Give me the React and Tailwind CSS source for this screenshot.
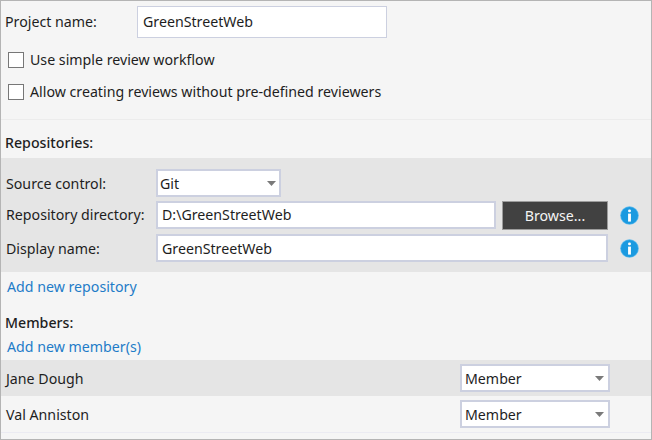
function Info() {
  return (
    <svg width="19" height="19" viewBox="0 0 20 20" className="shrink-0">
      <circle cx="10" cy="10" r="9.8" fill="#5cb9ec" />
      <circle cx="10" cy="10" r="9" fill="#1b9ae0" />
      <rect x="8.5" y="3.6" width="3" height="3" rx="1.3" fill="#fff" />
      <rect x="8.5" y="8" width="3" height="8.4" fill="#fff" />
    </svg>
  );
}

function Select({ value, className }) {
  return (
    <div className={`flex items-center justify-between bg-white border-2 border-[#ccd0e0] h-[28px] ${className}`}>
      <span className="pt-[2px]">{value}</span>
      <svg width="9" height="5" viewBox="0 0 9 5"><path d="M0 0h9L4.5 5z" fill="#7a7a7a" /></svg>
    </div>
  );
}

function Check({ label, className }) {
  return (
    <div className={`flex items-center gap-[6px] pl-[7px] ${className}`}>
      <div className="w-[16px] h-[16px] bg-white border border-[#777777]" />
      <span>{label}</span>
    </div>
  );
}

export default function App() {
  return (
    <div className="w-[652px] h-[440px] overflow-hidden bg-[#f5f5f5] border border-[#b4b4b4] text-[14.2px] leading-[20px] text-[#1e1e1e] font-['Noto_Sans',sans-serif]">
      <div className="flex items-center h-[32px] mt-[5px] pl-[4px]">
        <span className="w-[132px]">Project name:</span>
        <div className="w-[250px] h-[32px] flex items-center bg-white border border-[#ccd0e0] px-[5px]">GreenStreetWeb</div>
      </div>
      <Check label="Use simple review workflow" className="mt-[12px]" />
      <Check label="Allow creating reviews without pre-defined reviewers" className="mt-[12px]" />
      <div className="border-t border-[#ececec] mt-[17px]" />
      <div className="pl-[4px] mt-[13px] font-medium">Repositories:</div>
      <div className="bg-[#e5e5e5] mt-[5px] h-[114px] pt-[11px] pl-[5px]">
        <div className="flex items-center">
          <span className="w-[150px] pt-[2px]">Source control:</span>
          <Select value="Git" className="w-[125px] pl-[2px] pr-[3px]" />
        </div>
        <div className="flex items-start mt-[4px]">
          <span className="w-[150px] leading-[28px]">Repository directory:</span>
          <div className="w-[340px] h-[28px] flex items-center bg-white border-2 border-[#ccd0e0] px-[4px]">D:\GreenStreetWeb</div>
          <button className="w-[106px] h-[29px] ml-[6px] bg-[#414141] border border-[#9c9c9c] text-[#f4f4f4]">Browse...</button>
          <span className="ml-[12px] mt-[5px]"><Info /></span>
        </div>
        <div className="flex items-center mt-[4px]">
          <span className="w-[150px] pt-[2px]">Display name:</span>
          <div className="w-[452px] h-[28px] flex items-center bg-white border-2 border-[#ccd0e0] px-[4px] pt-[2px]">GreenStreetWeb</div>
          <span className="ml-[12px]"><Info /></span>
        </div>
      </div>
      <div className="pl-[6px] mt-[5px] text-[#1e7cc8]">Add new repository</div>
      <div className="pl-[4px] mt-[16px] font-medium">Members:</div>
      <div className="pl-[6px] mt-[4px] text-[#1e7cc8]">Add new member(s)</div>
      <div className="flex items-center justify-between h-[36px] mt-[3px] bg-[#e5e5e5] pl-[5px] pr-[41px]">
        <span className="pt-[2px]">Jane Dough</span>
        <Select value="Member" className="w-[150px] pl-[3px] pr-[4px]" />
      </div>
      <div className="flex items-center justify-between h-[36px] border-b border-[#ebebf2] box-content pl-[5px] pr-[41px]">
        <span className="pt-[2px]">Val Anniston</span>
        <Select value="Member" className="w-[150px] pl-[3px] pr-[4px]" />
      </div>
    </div>
  );
}
